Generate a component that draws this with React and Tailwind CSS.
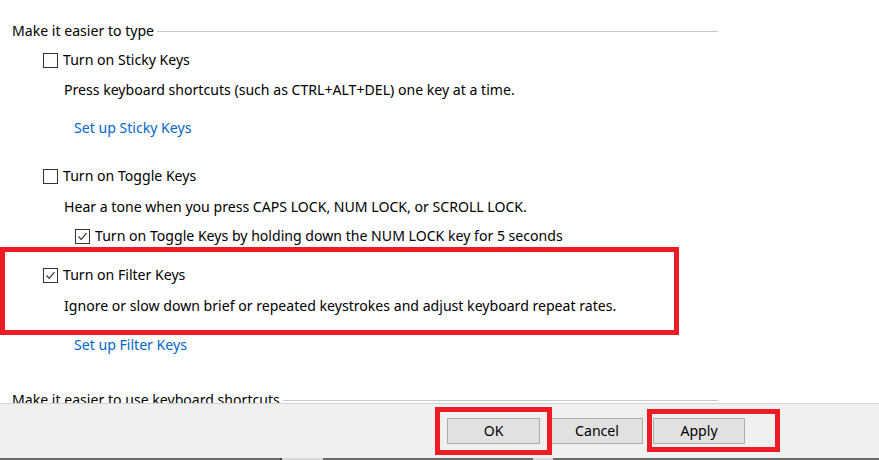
import React from "react";

const FONT = { fontFamily: '"Segoe UI", "Noto Sans", sans-serif' };

const CheckBox = ({ checked }) => (
  <span className="flex h-[15px] w-[15px] shrink-0 items-center justify-center border border-[#333333] bg-white">
    {checked && (
      <svg width="11" height="11" viewBox="0 0 11 11">
        <polyline
          points="1.5,5.5 4.2,8.3 9.5,2.2"
          fill="none"
          stroke="#333333"
          strokeWidth="1.2"
        />
      </svg>
    )}
  </span>
);

const Row = ({ children, className = "" }) => (
  <div className={"flex h-[22px] items-center " + className}>{children}</div>
);

const GroupHeader = ({ label, className = "" }) => (
  <Row className={"pl-[12px] " + className}>
    <span className="whitespace-nowrap">{label}</span>
    <span className="ml-[3px] mt-[1px] h-px flex-1 bg-[#c8c8c8]" />
    <span className="w-[161px]" />
  </Row>
);

const Option = ({ label, checked, className = "", indent = "pl-[43px]" }) => (
  <Row className={indent + " " + className}>
    <CheckBox checked={checked} />
    <span className="ml-[5px] whitespace-nowrap">{label}</span>
  </Row>
);

const Desc = ({ children, className = "" }) => (
  <Row className={"pl-[64px] " + className}>
    <span className="whitespace-nowrap">{children}</span>
  </Row>
);

const Link = ({ children, className = "" }) => (
  <Row className={"pl-[74px] " + className}>
    <span className="whitespace-nowrap text-[#0066cc]">{children}</span>
  </Row>
);

const DialogButton = ({ children, className = "" }) => (
  <button
    className={
      "h-[26px] border border-[#adadad] bg-[#e1e1e1] text-black " + className
    }
  >
    {children}
  </button>
);

export default function App() {
  return (
    <div
      className="relative h-[460px] w-[879px] overflow-hidden bg-white text-[14.1px] text-black"
      style={FONT}
    >
      <div className="h-[403px] overflow-hidden">
        <GroupHeader label="Make it easier to type" className="mt-[20px]" />
        <Option label="Turn on Sticky Keys" className="mt-[7px]" />
        <Desc className="mt-[8px]">
          Press keyboard shortcuts (such as CTRL+ALT+DEL) one key at a time.
        </Desc>
        <Link className="mt-[16px]">Set up Sticky Keys</Link>
        <Option label="Turn on Toggle Keys" className="mt-[26px]" />
        <Desc className="mt-[9px]">
          Hear a tone when you press CAPS LOCK, NUM LOCK, or SCROLL LOCK.
        </Desc>
        <Option
          label="Turn on Toggle Keys by holding down the NUM LOCK key for 5 seconds"
          checked
          indent="pl-[75px]"
          className="mt-[7px]"
        />
        <Option label="Turn on Filter Keys" checked className="mt-[17px]" />
        <Desc className="mt-[9px]">
          Ignore or slow down brief or repeated keystrokes and adjust keyboard
          repeat rates.
        </Desc>
        <Link className="mt-[17px]">Set up Filter Keys</Link>
        <GroupHeader
          label="Make it easier to use keyboard shortcuts"
          className="mt-[33px]"
        />
      </div>

      <div className="flex h-[55px] items-center border-t border-[#d4d4d4] bg-[#f0f0f0]">
        <DialogButton className="ml-[447px] w-[93px]">OK</DialogButton>
        <DialogButton className="ml-[11px] w-[92px]">Cancel</DialogButton>
        <DialogButton className="ml-[10px] w-[92px]">Apply</DialogButton>
      </div>
      <div className="flex h-[2px]">
        <div className="w-[280px] bg-[#6b6b6b]" />
        <div className="w-[2px] bg-[#3c3c3c]" />
        <div className="w-[41px] bg-[#d8d8d8]" />
        <div className="w-[210px] bg-[#6b6b6b]" />
        <div className="w-[20px] bg-[#d8d8d8]" />
        <div className="flex-1 bg-[#6b6b6b]" />
      </div>

      {/* red annotation boxes */}
      <div className="absolute left-0 top-[247px] h-[88px] w-[679px] border-[5px] border-[#ed1c24]" />
      <div className="absolute left-[435px] top-[407px] h-[48px] w-[117px] border-[5px] border-[#ed1c24]" />
      <div className="absolute left-[647px] top-[409px] h-[43px] w-[133px] border-[5px] border-[#ed1c24]" />
    </div>
  );
}
